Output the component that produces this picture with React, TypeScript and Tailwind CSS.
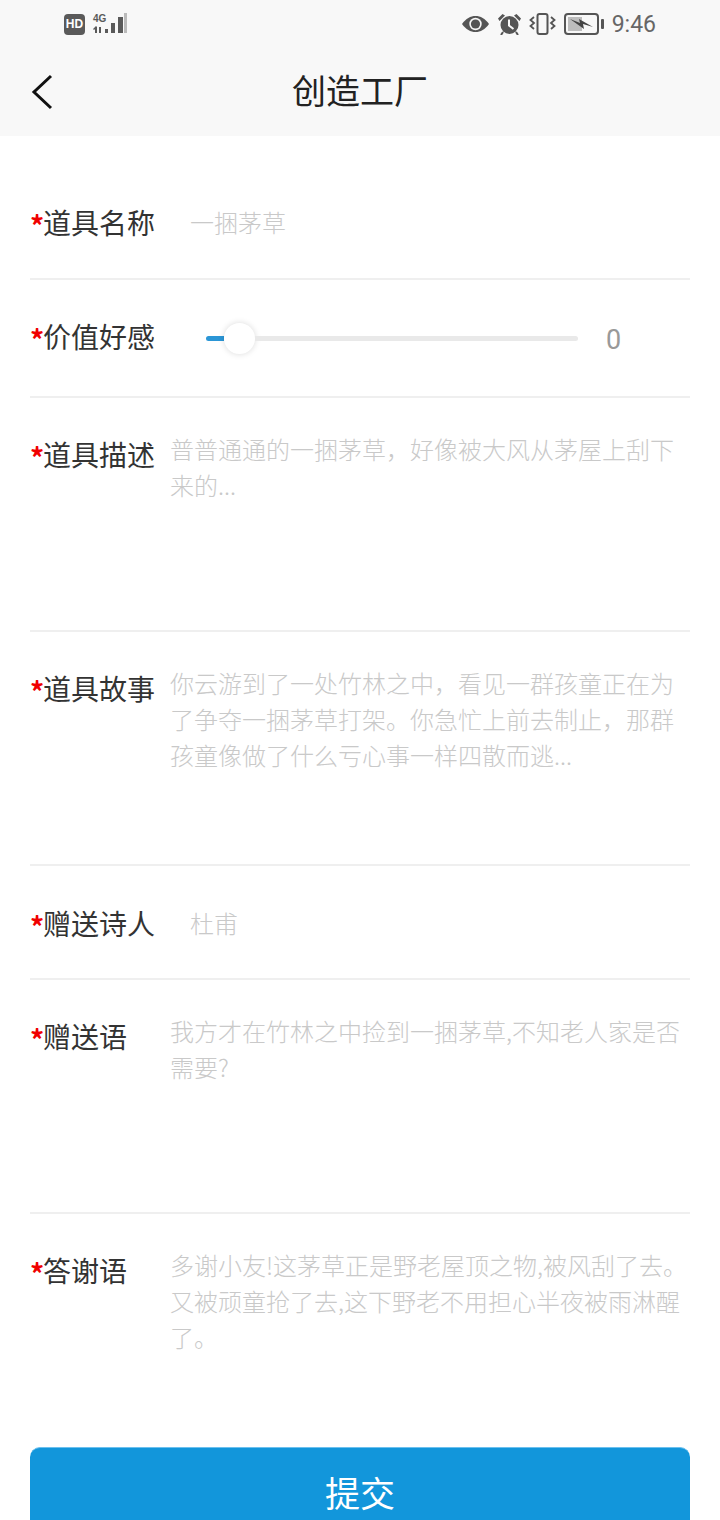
const cjk = "font-['Noto_Sans_CJK_SC','Noto_Sans',sans-serif]";

function Label({ text }: { text: string }) {
  return (
    <div className="flex w-[140px] shrink-0 items-start text-[28px] leading-[36px] text-[#333]">
      <span className="h-[36px] w-[13px] pt-[3px] text-[28px] font-bold leading-[36px] text-[#f00000]">*</span>
      <span>{text}</span>
    </div>
  );
}

function InputRow({ label, value, height }: { label: string; value: string; height: string }) {
  return (
    <div className={`mx-[30px] flex items-center border-b-2 border-[#efefef] ${height}`}>
      <Label text={label} />
      <span className="ml-[20px] text-[24px] font-light leading-[36px] text-[#c9c9c9]">{value}</span>
    </div>
  );
}

function AreaRow({ label, value }: { label: string; value: string }) {
  return (
    <div className="mx-[30px] flex h-[234px] items-start border-b-2 border-[#efefef] pt-[33px]">
      <div className="mt-[5px]">
        <Label text={label} />
      </div>
      <p className="w-[520px] text-[24px] font-light leading-[36px] text-[#c9c9c9]">{value}</p>
    </div>
  );
}

function StatusBar() {
  return (
    <div className="flex h-[48px] items-center justify-between px-[64px] text-[#555]">
      <div className="flex items-center gap-[7px]">
        <div className="flex h-[21px] w-[21px] items-center justify-center rounded-[4px] bg-[#5a5a5a] font-['Liberation_Sans',sans-serif] text-[12px] font-bold text-white">
          HD
        </div>
        <svg width="36" height="22" viewBox="0 0 36 22" fill="#5a5a5a">
          <text x="1" y="9" fontSize="10" fontWeight="700" fontFamily="Liberation Sans">4G</text>
          <path d="M3 14h2v6H3zM7 14h2v6H7zM1 16l3-3 1 1-3 3zM13 16h3v4h-3zM19 10h4v10h-4zM26 4h5v16h-5z" />
          <path d="M32 0h3v20h-3z" fill="#bbb" />
        </svg>
      </div>
      <div className="flex items-center">
        <svg width="27" height="16" viewBox="0 0 27 16" fill="#555">
          <path d="M0 8C4 2.500 8.500 0 13.500 0S23 2.500 27 8c-4 5.500-8.500 8-13.500 8S4 13.500 0 8z" />
          <circle cx="13.500" cy="8" r="6.200" fill="#f8f8f8" />
          <circle cx="13.500" cy="8" r="4.600" />
        </svg>
        <svg className="ml-[8px]" width="25" height="22" viewBox="0 0 25 22" fill="#555">
          <circle cx="12.500" cy="12" r="9" />
          <path d="M12 6.500v6l4.500 3.500" stroke="#f8f8f8" strokeWidth="2" fill="none" />
          <path d="M1 5.500L5.500 1 8 2.500 2.500 8zM24 5.500L19.500 1 17 2.500 22.500 8z" />
          <path d="M6 19l-2 3M19 19l2 3" stroke="#555" strokeWidth="2" />
        </svg>
        <svg className="ml-[7px]" width="27" height="22" viewBox="0 0 27 22" fill="none" stroke="#555" strokeWidth="2">
          <rect x="8.500" y="1" width="10" height="20" rx="2" />
          <path d="M5 4L1.500 7 5 10l-3.500 3L5 16M22 4l3.500 3L22 10l3.500 3L22 16" strokeWidth="1.800" />
        </svg>
        <svg className="ml-[8px]" width="40" height="22" viewBox="0 0 40 22" fill="none">
          <rect x="1" y="1" width="33" height="20" rx="3" stroke="#555" strokeWidth="2" />
          <rect x="4" y="4" width="14" height="14" fill="#bdbdbd" />
          <path d="M6 6l10 4-1-4 14 8-10-3 1 5z" fill="#444" />
          <rect x="37" y="6" width="3" height="10" rx="1" fill="#555" />
        </svg>
        <span className="ml-[8px] font-['Roboto',sans-serif] text-[23px] leading-none text-[#666]">9:46</span>
      </div>
    </div>
  );
}

export default function App() {
  return (
    <div className={`h-[1520px] w-[720px] overflow-hidden bg-white ${cjk}`}>
      <div className="h-[136px] bg-[#f8f8f8]">
        <StatusBar />
        <div className="relative flex h-[88px] items-center justify-center pb-[4px]">
          <svg className="absolute left-[30px] top-[26px]" width="24" height="36" viewBox="0 0 24 36" fill="none" stroke="#111" strokeWidth="3">
            <path d="M21 2L4 18l17 16" />
          </svg>
          <span className="text-[34px] leading-none text-[#222]">创造工厂</span>
        </div>
      </div>

      <InputRow label="道具名称" value="一捆茅草" height="h-[144px] pt-[29px]" />

      <div className="mx-[30px] flex h-[118px] items-center border-b-2 border-[#efefef] pb-[5px]">
        <Label text="价值好感" />
        <div className="ml-[36px] mt-[6px] flex w-[372px] items-center">
          <div className="h-[5px] w-[18px] rounded-l-full bg-[#2b96d6]" />
          <div className="h-[31px] w-[31px] shrink-0 rounded-full bg-white shadow-[0_0_6px_rgba(0,0,0,0.15)]" />
          <div className="h-[5px] flex-1 rounded-r-full bg-[#e9e9e9]" />
        </div>
        <span className="ml-[28px] mt-[10px] font-['Roboto',sans-serif] text-[27px] leading-none text-[#999]">0</span>
      </div>

      <AreaRow label="道具描述" value="普普通通的一捆茅草，好像被大风从茅屋上刮下来的..." />
      <AreaRow label="道具故事" value="你云游到了一处竹林之中，看见一群孩童正在为了争夺一捆茅草打架。你急忙上前去制止，那群孩童像做了什么亏心事一样四散而逃..." />
      <InputRow label="赠送诗人" value="杜甫" height="h-[114px] pt-[2px]" />
      <AreaRow label="赠送语" value="我方才在竹林之中捡到一捆茅草,不知老人家是否需要?" />
      <div className="mx-[30px] flex h-[233px] items-start pt-[33px]">
        <div className="mt-[5px]">
          <Label text="答谢语" />
        </div>
        <p className="w-[520px] text-[24px] font-light leading-[36px] text-[#c9c9c9]">
          多谢小友!这茅草正是野老屋顶之物,被风刮了去。又被顽童抢了去,这下野老不用担心半夜被雨淋醒了。
        </p>
      </div>

      <button className="mx-[30px] flex h-[96px] w-[660px] items-center justify-center rounded-[10px] border-t border-[#6cc0ee] bg-[#1296db] pb-[6px] text-[35px] text-white">
        提交
      </button>
    </div>
  );
}
